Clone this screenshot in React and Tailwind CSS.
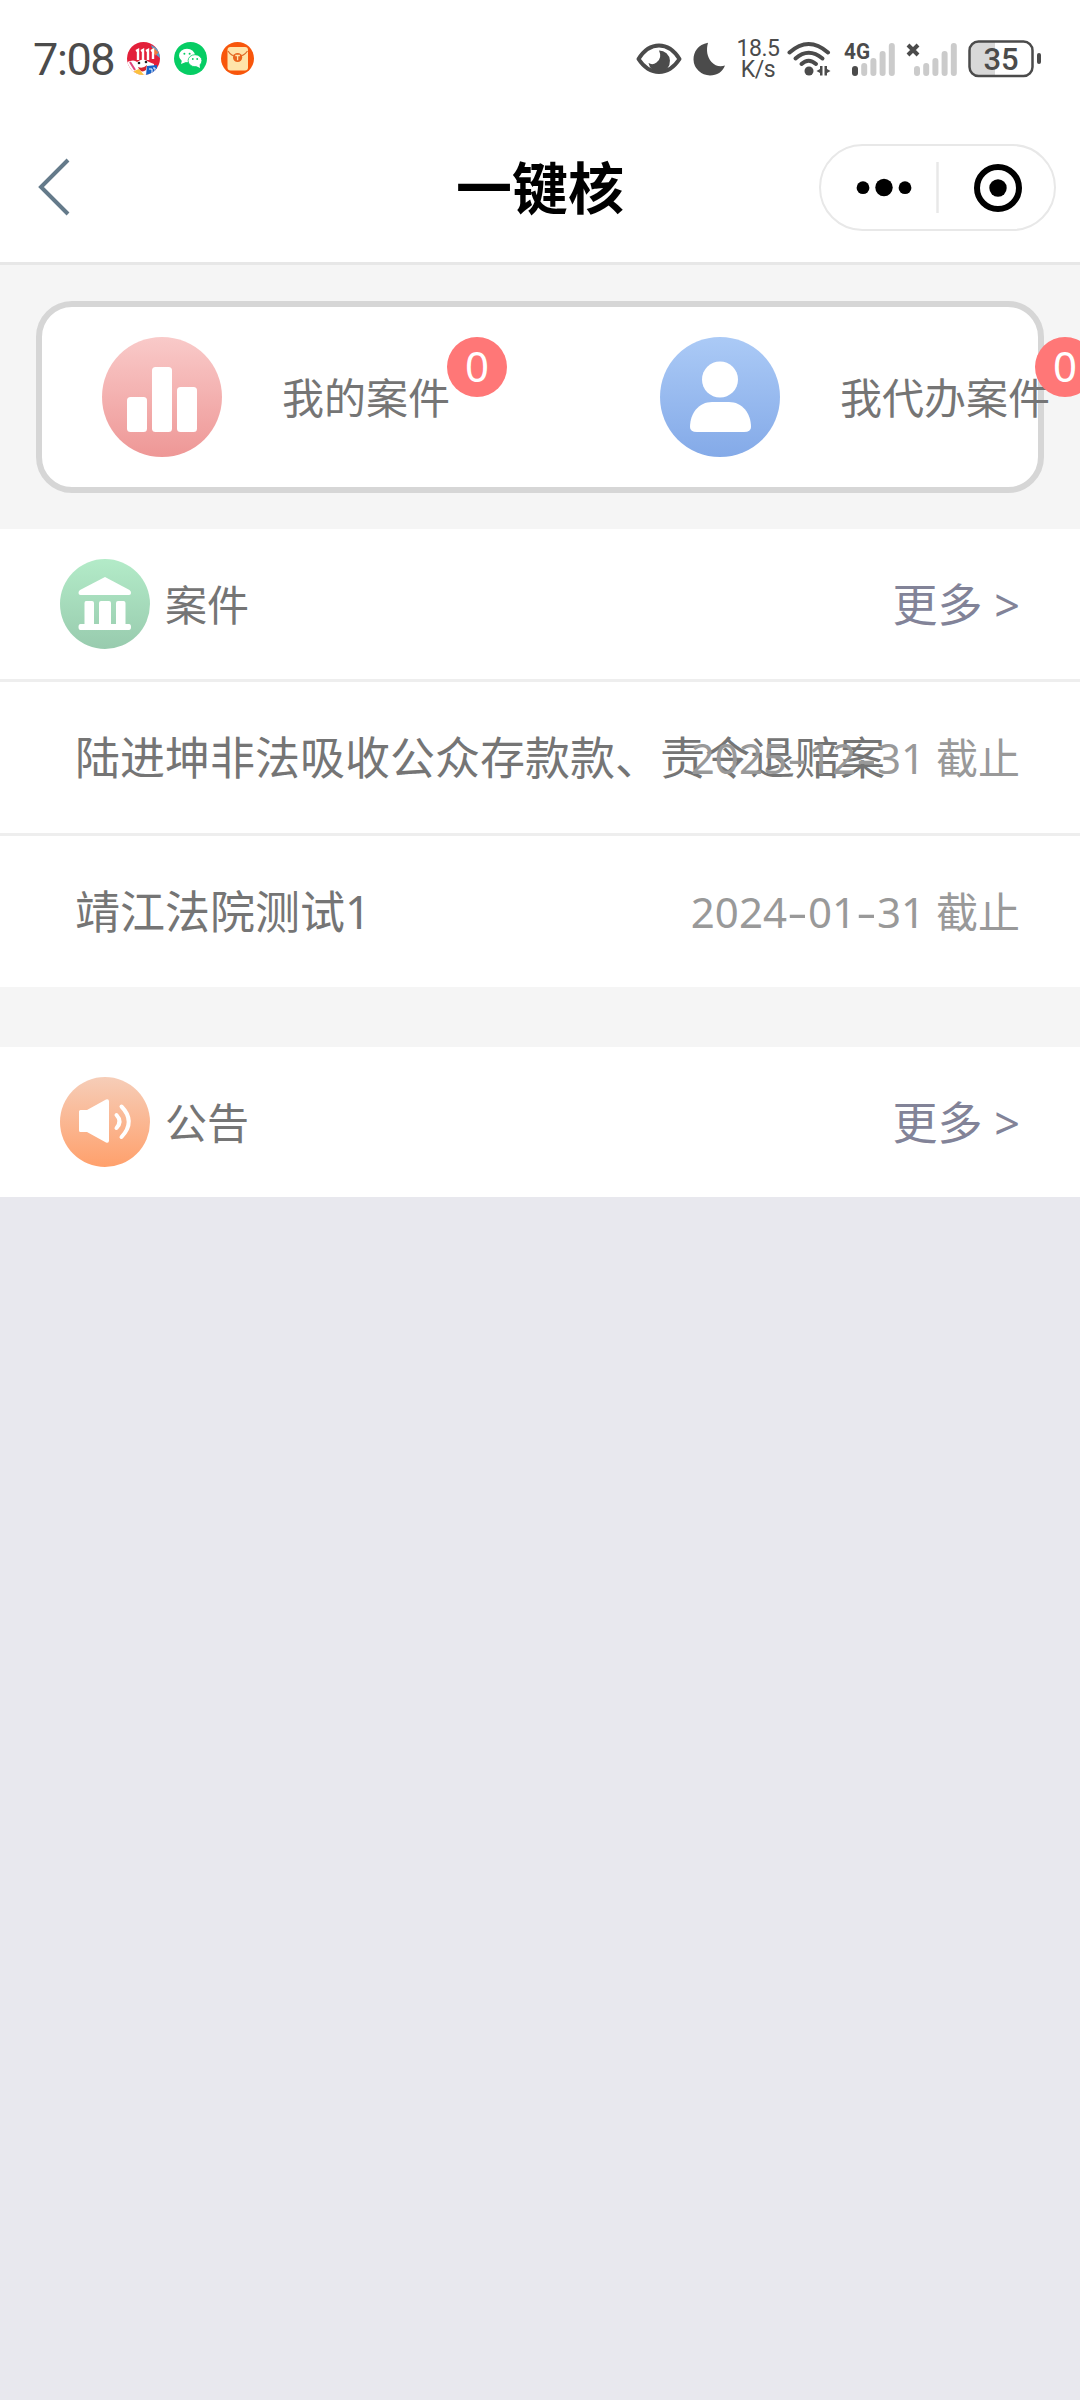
import React from 'react';

const cases = [
    { id: 1, name: '陆进坤非法吸收公众存款款、责令退赔案', date: '2025-12-31' },
    { id: 2, name: '靖江法院测试1', date: '2024-01-31' },
];

const SignalBars = ({ label, active }) => (
    <svg width="52" height="38" viewBox="0 0 52 38" className="shrink-0">
        {label ? (
            <text x="0" y="19" fontSize="22" fontWeight="700" textLength="26" lengthAdjust="spacingAndGlyphs" fill="#4b4b4b" fontFamily="Roboto, sans-serif">{label}</text>
        ) : (
            <path d="M2 5l10 10M12 5l-10 10" stroke="#4b4b4b" strokeWidth="4" />
        )}
        {[26, 23, 18, 11, 3].map((top, i) => (
            <rect
                key={top}
                x={8 + i * 9.2}
                y={top}
                width="6"
                height={36 - top}
                rx="3"
                fill={i === 0 && active ? '#4b4b4b' : '#cbcbcb'}
            />
        ))}
    </svg>
);

const StatusBar = () => (
    <div className="flex h-[117px] items-center pl-[33px] text-[#4b4b4b]">
        <span className="w-[94px] pt-0.5 font-[Roboto,sans-serif] text-[45px] leading-none tracking-[-1.4px]">7:08</span>

        {/* Notification icons */}
        <div className="flex gap-[14px]">
            <svg width="33" height="33" viewBox="0 0 33 33">
                <clipPath id="promo"><circle cx="16.5" cy="16.5" r="16.5" /></clipPath>
                <g clipPath="url(#promo)">
                    <rect width="33" height="33" fill="#e3203a" />
                    <path d="M24 3l9 5v8l-6-5z" fill="#54a0cf" />
                    <path d="M25 7l5 5" stroke="#f27a3d" strokeWidth="4" />
                    <path d="M0 20q7-3 10 0 6-5 12 0l5 2v11H0z" fill="#fff" />
                    <path d="M9 9l2-1v10M14 9l2-1v10M19 9l2-1v10M24 9l2-1v9" fill="none" stroke="#fff" strokeWidth="2.4" />
                    <circle cx="12" cy="21" r="1.3" fill="#222" />
                    <circle cx="19" cy="20" r="1.3" fill="#222" />
                    <path d="M11 25q5 2 9-2l-1 5q-5 4-8-3z" fill="#d4242e" />
                    <path d="M7 29l5-2 5 6H8z" fill="#fbc03d" />
                    <path d="M20 24l10-1v10H19z" fill="#1763c8" />
                    <path d="M22 27h3v4M26 26h2v4" fill="none" stroke="#fff" />
                    <path d="M3 20l5 8" stroke="#e0447c" strokeWidth="2" />
                </g>
            </svg>
            <svg width="33" height="33" viewBox="0 0 33 33">
                <circle cx="16.5" cy="16.5" r="16.5" fill="#06cd64" />
                <ellipse cx="13" cy="13.5" rx="8" ry="6.8" fill="#fff" />
                <path d="M8 18l-1 4 5-2z" fill="#fff" />
                <ellipse cx="21" cy="18.7" rx="6.9" ry="6" fill="#fff" stroke="#06cd64" strokeWidth="0.8" />
                <path d="M22 24l4 2-.5-4z" fill="#fff" />
                <g fill="#06cd64">
                    <circle cx="10.4" cy="11.8" r="1" />
                    <circle cx="15.6" cy="11.8" r="1" />
                    <circle cx="18.8" cy="17" r="0.9" />
                    <circle cx="23.2" cy="17" r="0.9" />
                </g>
            </svg>
            <svg width="33" height="33" viewBox="0 0 33 33">
                <circle cx="16.5" cy="16.5" r="16.5" fill="#f8560b" />
                <rect x="6.5" y="5" width="20.5" height="23.5" rx="3" fill="#ffe4aa" />
                <path d="M7 9q3 5 9.5 6 6.5-1 10-6" fill="none" stroke="#dc6a28" strokeWidth="1.2" />
                <circle cx="16.6" cy="15.5" r="4.6" fill="#e9641d" />
                <path d="M14.3 13.5h4.6M16.6 13.5v4.8" stroke="#ffe4aa" strokeWidth="1.3" />
            </svg>
        </div>

        <div className="ml-auto flex items-center pr-[37px]">
            <svg width="46" height="32" viewBox="0 0 46 32">
                <path d="M2.5 16Q11 2.500 23 2.500T43.500 16Q35 29 23 29T2.500 16z" fill="none" stroke="#4b4b4b" strokeWidth="4" strokeLinejoin="round" />
                <path d="M23 7.500A10.800 10.800 0 1 1 12.500 20q4 2.500 8-.5 6-4.500 2.500-12z" fill="#4b4b4b" />
            </svg>
            <svg width="33" height="34" viewBox="0 0 33 34" className="ml-[11px]">
                <path d="M15 .8C5 2.500.500 10 .500 17.500A16.500 16.500 0 0 0 17 33.500c7 0 12.500-3.500 15-10-5 1.500-10 .500-13.500-3.500C14 15 13 8 15 .8z" fill="#4b4b4b" />
            </svg>
            <div className="ml-[11px] flex w-[42px] flex-col items-center font-[Roboto,sans-serif] text-[23px] leading-[21px] tracking-[-0.4px]">
                <span>18.5</span>
                <span>K/s</span>
            </div>
            <svg width="44" height="36" viewBox="0 0 44 36" className="ml-2 mr-px">
                <g fill="none" stroke="#4b4b4b" strokeWidth="4" strokeLinecap="round">
                    <path d="M2.500 11.500Q21.500-5.500 41 11.500" />
                    <path d="M8.500 17.500Q21.500 6 35.500 17.500" />
                    <path d="M14.500 23Q21.500 16.500 29 23" />
                </g>
                <circle cx="22" cy="30" r="4.500" fill="#4b4b4b" />
                <path d="M35.500 25v9.500h-2.500V32l-3.500-2 3.500-2v-3zM37.500 25H40v3l3.500 2-3.500 2v2.500h-2.500z" fill="#4b4b4b" />
            </svg>
            <div className="ml-3 flex gap-[10px]">
                <SignalBars label="4G" active />
                <SignalBars />
            </div>
            <svg width="75" height="38" viewBox="0 0 75 38" className="ml-[10px] shrink-0">
                <path d="M11 2h16v34H11a9 9 0 0 1-9-9V11a9 9 0 0 1 9-9z" fill="#d8d8d8" />
                <rect x="1.500" y="1.500" width="63" height="34.500" rx="9" fill="none" stroke="#4b4b4b" strokeWidth="2.500" />
                <rect x="69" y="13" width="4" height="11" rx="2" fill="#4b4b4b" />
                <text x="33" y="29.500" textAnchor="middle" fontSize="31" fontWeight="500" fill="#4b4b4b" fontFamily="Roboto, sans-serif">35</text>
            </svg>
        </div>
    </div>
);

const NavBar = () => (
    <div className="grid h-[148px] grid-cols-3 items-center border-b-3 border-[#e7e7e7] px-6 pb-[5px]">
        <svg width="36" height="60" viewBox="0 0 36 60" className="ml-3">
            <path d="M32 3L5 30l27 27" fill="none" stroke="#647a8a" strokeWidth="4" />
        </svg>
        <h1 className="text-center text-[56px] leading-none font-bold text-black">一键核</h1>
        <div className="flex h-[87px] w-[237px] items-center justify-self-end rounded-full border-2 border-[#e8e8e8]">
            <svg width="233" height="83" viewBox="0 0 233 83">
                <circle cx="42" cy="41.700" r="6.400" />
                <circle cx="63" cy="41.500" r="8.700" />
                <circle cx="84" cy="41.700" r="6.400" />
                <path d="M116.500 16v51" stroke="#e8e8e8" strokeWidth="2.500" />
                <circle cx="177" cy="42" r="21" fill="none" stroke="#000" strokeWidth="6" />
                <circle cx="177" cy="42" r="8.700" />
            </svg>
        </div>
    </div>
);

const ChartIcon = () => (
    <svg width="120" height="120" viewBox="0 0 120 120" className="shrink-0">
        <linearGradient id="pink" x2="0" y2="1">
            <stop stopColor="#f9cac9" />
            <stop offset="1" stopColor="#ee9796" />
        </linearGradient>
        <circle cx="60" cy="60" r="60" fill="url(#pink)" />
        <g fill="#fff">
            <rect x="25" y="60" width="20" height="35" rx="3.500" />
            <rect x="50" y="30" width="20" height="65" rx="3.500" />
            <rect x="75" y="50" width="20" height="45" rx="3.500" />
        </g>
    </svg>
);

const UserIcon = () => (
    <svg width="120" height="120" viewBox="0 0 120 120" className="shrink-0">
        <linearGradient id="blue" x2="0" y2="1">
            <stop stopColor="#abcaf6" />
            <stop offset="1" stopColor="#84aae8" />
        </linearGradient>
        <circle cx="60" cy="60" r="60" fill="url(#blue)" />
        <circle cx="60" cy="42.500" r="18" fill="#fff" />
        <path d="M52 65h17c13 0 22 11 22 25q0 5-7 5H37q-7 0-7-5c0-14 9-25 22-25z" fill="#fff" />
    </svg>
);

const BankIcon = () => (
    <svg width="90" height="90" viewBox="0 0 90 90">
        <linearGradient id="green" x2="0" y2="1">
            <stop stopColor="#b3ebc8" />
            <stop offset="1" stopColor="#98cbae" />
        </linearGradient>
        <circle cx="45" cy="45" r="45" fill="url(#green)" />
        <g fill="#fff">
            <path d="M45 18l24.500 13q1.500 1 1.500 3 0 2-2 2H20.500q-2 0-2-2 0-2 1.500-3z" />
            <path d="M26 42h6q2 0 2 2v21h5V44q0-2 2-2h8q2 0 2 2v21h5V44q0-2 2-2h5.500q2 0 2 2v21h3.500q2 0 2 3t-2 3H20.500q-2 0-2-3t2-3h4V44q0-2 1.500-2z" />
        </g>
    </svg>
);

const SpeakerIcon = () => (
    <svg width="90" height="90" viewBox="0 0 90 90">
        <linearGradient id="orange" x2="0" y2="1">
            <stop stopColor="#f6cdb8" />
            <stop offset="1" stopColor="#ffa06c" />
        </linearGradient>
        <circle cx="45" cy="45" r="45" fill="url(#orange)" />
        <path d="M20.500 33H27l19-10.500q3-1 3 2v39q0 3-3 2L27 55h-6.500q-1.500 0-1.500-1.500v-19q0-1.500 1.500-1.500z" fill="#fff" />
        <g fill="none" stroke="#fff" strokeWidth="4" strokeLinecap="round">
            <path d="M56.500 38q6 6.500 0 13" />
            <path d="M61.500 29.500q14.500 15 0 30.500" />
        </g>
    </svg>
);

const Badge = ({ className }) => (
    <span className={`absolute top-0 flex size-[60px] items-center justify-center rounded-full bg-[#ff7777] pb-0.5 text-[42px] leading-none text-white ${className}`}>0</span>
);

const SectionHeader = ({ icon, title }) => (
    <div className="flex h-[150px] items-center px-[60px]">
        {icon}
        <h2 className="ml-[15px] pt-0.5 text-[42px] leading-[60px] text-[#757575]">{title}</h2>
        <span className="ml-auto pt-0.5 text-[45px] leading-[60px] text-[#828398]">更多 &gt;</span>
    </div>
);

const CaseDate = ({ date }) => (
    <span className="absolute right-[60px] text-[42px] leading-[60px] whitespace-nowrap text-[#999]">
        {date.split('-').map((part, i) => (
            <React.Fragment key={i}>
                {i > 0 && <span className="inline-block w-[21px] scale-x-150 text-center">-</span>}
                {part}
            </React.Fragment>
        ))}
        {' 截止'}
    </span>
);

const App = () => {
    return (
        <div className="min-h-[2400px] w-[1080px] overflow-hidden bg-[#e8e8ee] font-['Noto_Sans','Noto_Sans_CJK_SC',sans-serif]">
            <div className="bg-white">
                <StatusBar />
                <NavBar />
            </div>

            {/* Entry card */}
            <div className="h-[264px] bg-[#f5f5f5] px-9 py-9">
                <div className="flex h-48 rounded-[36px] border-6 border-[#d6d6d6] bg-white py-[30px] text-[42px] leading-[60px] whitespace-nowrap text-[#757575]">
                    <div className="relative flex w-[558px] shrink-0 items-center pl-[60px]">
                        <ChartIcon />
                        <span className="ml-[60px] pt-0.5">我的案件</span>
                        <Badge className="left-[405px]" />
                    </div>
                    <div className="relative flex w-[558px] shrink-0 items-center pl-[60px]">
                        <UserIcon />
                        <span className="ml-[60px] pt-0.5">我代办案件</span>
                        <Badge className="left-[435px]" />
                    </div>
                </div>
            </div>

            {/* Cases */}
            <div className="bg-white">
                <SectionHeader icon={<BankIcon />} title="案件" />
                {cases.map(item => (
                    <div key={item.id} className="relative flex h-[154px] items-center border-t-3 border-[#eeeeee] px-[75px]">
                        <span className="text-[45px] leading-[60px] whitespace-nowrap text-[#757575]">{item.name}</span>
                        <CaseDate date={item.date} />
                    </div>
                ))}
            </div>

            {/* Notices */}
            <div className="border-t-60 border-[#f5f5f5] bg-white">
                <SectionHeader icon={<SpeakerIcon />} title="公告" />
            </div>
        </div>
    );
};

export default App;
